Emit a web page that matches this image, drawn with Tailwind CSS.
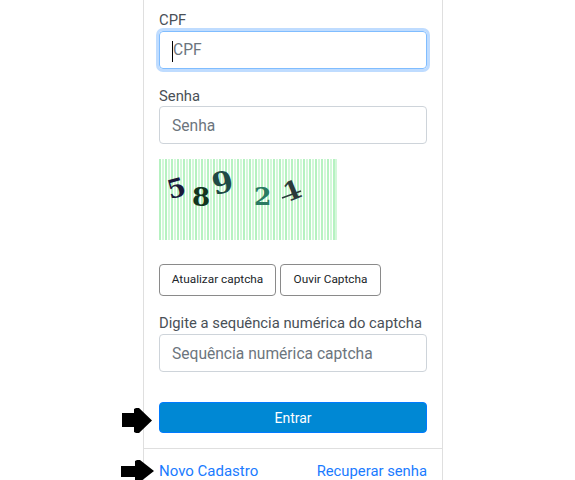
<!DOCTYPE html>
<html lang="pt-BR">
<head>
    <meta charset="UTF-8">
    <title>Login</title>
    <script src="https://cdn.jsdelivr.net/npm/@tailwindcss/browser@4"></script>
</head>
<body class="bg-white h-[480px] overflow-hidden font-['Roboto',sans-serif] text-[14.8px] text-[#495057]">
    <div class="relative w-[300px] h-[480px] ml-[143px] border-x border-[#dfdfdf]">
        <form class="px-[15px] pt-[7px]">
            <label class="block leading-6 h-6 pt-px">CPF</label>
            <div class="h-[38px] flex items-center px-3 pt-[2px] border border-[#80bdff] rounded-[4px] ring-[3px] ring-[#bfdcff] text-[#6c757d] text-[15.6px]">
                <span class="w-px h-[21px] bg-black"></span>CPF
            </div>

            <label class="block leading-6 h-6 pt-[2px] mt-[13px]">Senha</label>
            <div class="h-[38px] flex items-center px-3 pt-[4px] border border-[#ced4da] rounded-[4px] text-[#6c757d] text-[15.6px]">Senha</div>

            <svg class="block mt-[15px]" width="178" height="81" viewBox="0 0 178 81">
                <path d="M4 0V81M10 0V81M16 0V81M22 0V81M28 0V81M34 0V81M40 0V81M46 0V81M52 0V81M58 0V81M64 0V81M70 0V81M76 0V81M82 0V81M88 0V81M94 0V81M100 0V81M106 0V81M112 0V81M118 0V81M124 0V81M130 0V81M136 0V81M142 0V81M148 0V81M154 0V81M160 0V81M166 0V81M172 0V81M177 0V81" stroke="#b8f4c2" stroke-width="1.2"/>
                <path d="M1 0V81M7 0V81M13 0V81M19 0V81M25 0V81M31 0V81M37 0V81M43 0V81M49 0V81M55 0V81M61 0V81M67 0V81M73 0V81M79 0V81M85 0V81M91 0V81M97 0V81M103 0V81M109 0V81M115 0V81M121 0V81M127 0V81M133 0V81M139 0V81M145 0V81M151 0V81M157 0V81M163 0V81M169 0V81M175 0V81" stroke="#86ea98" stroke-width="1.2"/>
                <g font-family="'DejaVu Serif',serif" font-weight="bold">
                    <text x="8" y="38" font-size="26" fill="#1a1a3a" transform="rotate(-15 18 28)">5</text>
                    <text x="33" y="47" font-size="26" fill="#12351f">8</text>
                    <text x="53" y="34" font-size="30" fill="#1f4a45" transform="rotate(-12 64 23)">9</text>
                    <text x="95" y="46" font-size="25" fill="#2a7a62">2</text>
                    <text x="124" y="41" font-size="26" fill="#2c3a3a" transform="rotate(-22 132 30)">1</text>
                </g>
                <path d="M123 39L142 32" stroke="#2c3a3a" stroke-width="1.5"/>
            </svg>

            <div class="flex gap-1 mt-6">
                <button type="button" class="h-8 w-[117px] border border-[#8a8a8a] rounded-[4px] text-[11.8px] text-[#212529]">Atualizar captcha</button>
                <button type="button" class="h-8 w-[101px] border border-[#8a8a8a] rounded-[4px] text-[11.8px] text-[#212529]">Ouvir Captcha</button>
            </div>

            <label class="block leading-6 h-6 pt-px mt-[14px]">Digite a sequência numérica do captcha</label>
            <div class="h-[38px] flex items-center px-3 pt-[3px] border border-[#ced4da] rounded-[4px] text-[#6c757d] text-[15.6px]">Sequência numérica captcha</div>

            <button type="button" class="block w-full h-[31px] mt-[30px] bg-[#0088d4] border border-[#007bff] rounded-[4px] text-white text-sm">Entrar</button>
        </form>
        <div class="mt-[15px] border-t border-[#dfdfdf] px-[15px] pt-[12px] flex justify-between text-[#1a7bff] leading-5 text-[15px]">
            <a href="#">Novo Cadastro</a>
            <a href="#" class="text-[14.8px]">Recuperar senha</a>
        </div>

        <svg class="absolute left-[-22px] top-[408px]" width="30" height="25" viewBox="0 0 30 25"><path d="M0 5H12V1L14 0H17L30 12.5L17 25H14L12 24V19H0Z" fill="#000"/></svg>
        <svg class="absolute left-[-23px] top-[460px]" width="33" height="22" viewBox="0 0 33 22"><path d="M0 6H14V1L16 0H19L33 11L19 22H16L14 21V17H0Z" fill="#000"/></svg>
    </div>
</body>
</html>
